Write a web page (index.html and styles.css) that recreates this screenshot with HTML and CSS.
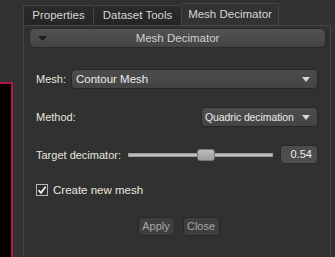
FILE: index.html
```html
<!DOCTYPE html>
<html>
<head>
<meta charset="utf-8">
<link rel="stylesheet" href="styles.css">
</head>
<body>
<div class="app">
  <div class="side">
    <div class="viewer"></div>
  </div>
  <div class="main">
    <div class="tabs">
      <div class="tab">Properties</div>
      <div class="tab">Dataset Tools</div>
      <div class="tab active">Mesh Decimator</div>
    </div>
    <div class="panel">
      <div class="group-head">
        <svg class="caret" width="9" height="5" viewBox="0 0 9 5"><path d="M0 0H9L4.5 5Z" fill="#1e1e1e"/></svg>
        <span>Mesh Decimator</span>
      </div>
      <div class="form">
        <div class="row row-mesh">
          <span class="label">Mesh:</span>
          <div class="combo wide"><span>Contour Mesh</span><svg class="arrow" width="8" height="5" viewBox="0 0 8 5"><path d="M0 0H8L4 5Z" fill="#d8d8d8"/></svg></div>
        </div>
        <div class="row row-method">
          <span class="label">Method:</span>
          <div class="combo narrow"><span>Quadric decimation</span><svg class="arrow" width="8" height="5" viewBox="0 0 8 5"><path d="M0 0H8L4 5Z" fill="#d8d8d8"/></svg></div>
        </div>
        <div class="row row-target">
          <span class="label">Target decimator:</span>
          <div class="slider">
            <div class="groove"></div>
            <div class="handle"></div>
          </div>
          <div class="value">0.54</div>
        </div>
        <div class="row row-check">
          <span class="check"><svg width="10" height="10" viewBox="0 0 10 10"><path d="M1.5 5.2L4 7.8L8.6 1.8" fill="none" stroke="#f0f0f0" stroke-width="1.8"/></svg></span>
          <span class="label">Create new mesh</span>
        </div>
        <div class="buttons">
          <div class="btn">Apply</div>
          <div class="btn">Close</div>
        </div>
      </div>
    </div>
  </div>
</div>
</body>
</html>
```
FILE: styles.css
```css
html, body {
  margin: 0;
  padding: 0;
  background: #313131;
  width: 335px;
  height: 257px;
  overflow: hidden;
  font-family: "Liberation Sans", Arial, sans-serif;
  font-size: 11px;
  color: #e4e4e4;
}
.app {
  display: flex;
  height: 257px;
}
.side {
  width: 23px;
  flex: none;
}
.viewer {
  margin-top: 82px;
  width: 11px;
  height: 175px;
  background: #000;
  border-top: 2px solid #b0154f;
  border-right: 2px solid #b0154f;
}
.main {
  flex: none;
  width: 308px;
  display: flex;
  flex-direction: column;
}
.tabs {
  display: flex;
  align-items: flex-end;
  height: 25px;
  flex: none;
}
.tab {
  height: 20px;
  line-height: 19px;
  box-sizing: border-box;
  white-space: nowrap;
  text-align: center;
  background: linear-gradient(#2b2b2b, #252525);
  border: 1px solid #454545;
  border-bottom: none;
  border-radius: 2px 2px 0 0;
  color: #d6d6d6;
  font-size: 11.5px;
}
.tab:first-child { width: 71px; }
.tab:nth-child(2) { width: 88px; border-left: none; }
.tab.active {
  width: 97px;
  height: 22px;
  line-height: 21px;
  background: #323232;
  border-left: none;
}
.panel {
  flex: 1;
  border: 1px solid #474747;
  border-bottom: none;
  background: #313131;
  padding: 2px 4px 0 5px;
}
.group-head {
  position: relative;
  height: 20px;
  box-sizing: border-box;
  border: 1px solid #2a2a2a;
  border-radius: 6px;
  background: linear-gradient(#525252, #444444);
  text-align: center;
  line-height: 18px;
  font-size: 11.5px;
  color: #cfcfcf;
  white-space: nowrap;
}
.caret {
  position: absolute;
  left: 8px;
  top: 7px;
}
.form {
  padding: 0 8px 0 7px;
}
.row {
  display: flex;
  align-items: center;
  white-space: nowrap;
}
.label {
  font-size: 11px;
  color: #e8e6dc;
}
.row-mesh {
  margin-top: 21px;
  height: 20px;
}
.row-mesh .label { width: 35px; }
.combo {
  height: 20px;
  box-sizing: border-box;
  border: 1px solid #262626;
  border-radius: 4px;
  background: linear-gradient(#4c4c4c, #444444);
  display: flex;
  align-items: center;
  padding: 0 7px 0 4px;
  color: #ececec;
  font-size: 11.5px;
}
.combo span { flex: 1; }
.wide { flex: 1; }
.row-method {
  margin-top: 18px;
  height: 20px;
  justify-content: space-between;
}
.narrow { width: 117px; padding-left: 3px; }
.narrow span { font-size: 10.5px; letter-spacing: -0.1px; }
.row-target {
  margin-top: 18px;
  height: 19px;
}
.row-target .label { width: 92px; }
.slider {
  position: relative;
  width: 145px;
  height: 14px;
}
.groove {
  position: absolute;
  left: 0;
  right: 0;
  top: 5px;
  height: 4px;
  box-sizing: border-box;
  background: #bdbdbd;
  border: 1px solid #9a9a9a;
}
.handle {
  position: absolute;
  left: 69px;
  top: 1px;
  width: 18px;
  height: 12px;
  box-sizing: border-box;
  background: linear-gradient(#bdbdbd, #9d9d9d);
  border: 1px solid #777;
  border-radius: 3px;
}
.value {
  margin-left: 7px;
  width: 38px;
  height: 19px;
  box-sizing: border-box;
  background: #4d4d4d;
  border: 1px solid #2a2a2a;
  border-radius: 4px;
  text-align: right;
  padding-right: 5px;
  line-height: 17px;
  color: #ececec;
  font-size: 11px;
}
.row-check {
  margin-top: 19px;
  height: 14px;
}
.check {
  width: 12px;
  height: 12px;
  box-sizing: border-box;
  border: 1px solid #b8b8b8;
  background: #2e2e2e;
  margin-right: 5px;
  display: flex;
  align-items: center;
  justify-content: center;
}
.row-check .label { font-size: 11.5px; }
.buttons {
  margin-top: 20px;
  display: flex;
  justify-content: center;
  gap: 8px;
  padding-left: 3px;
}
.btn {
  height: 19px;
  width: 37px;
  text-align: center;
  box-sizing: border-box;
  border: 1px solid #272727;
  border-radius: 4px;
  background: #3e3e3e;
  color: #a6a6a6;
  line-height: 17px;
  font-size: 11px;
}
```
